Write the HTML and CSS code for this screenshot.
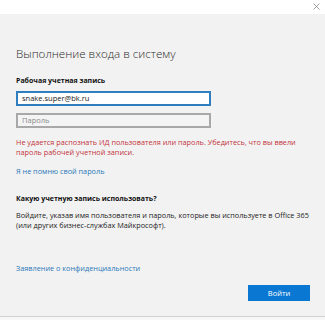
FILE: index.html
```html
<!DOCTYPE html>
<html lang="ru">
<head>
<meta charset="utf-8">
<title>Выполнение входа в систему</title>
<link rel="stylesheet" href="styles.css">
</head>
<body>
<div class="window">
  <div class="topbar">
    <svg class="close" width="7" height="7" viewBox="0 0 7 7" aria-label="Закрыть"><path d="M0.5 0.5 L6.5 6.5 M6.5 0.5 L0.5 6.5" stroke="#8a8a8a" stroke-width="0.8" fill="none"/></svg>
  </div>
  <div class="panel">
    <h1 class="title">Выполнение входа в систему</h1>
    <div class="label">Рабочая учетная запись</div>
    <div class="input input-active">snake.super@bk.ru</div>
    <div class="input input-pass">Пароль</div>
    <p class="error">Не удается распознать ИД пользователя или пароль. Убедитесь, что вы ввели пароль рабочей учетной записи.</p>
    <a class="link forgot" href="#">Я не помню свой пароль</a>
    <div class="label question">Какую учетную запись использовать?</div>
    <p class="para">Войдите, указав имя пользователя и пароль, которые вы используете в Office 365 (или других бизнес-службах Майкрософт).</p>
    <a class="link privacy" href="#">Заявление о конфиденциальности</a>
    <div class="actions"><button class="btn">Войти</button></div>
  </div>
  <div class="bottom"></div>
</div>
</body>
</html>
```
FILE: styles.css
```css
html, body {
  margin: 0;
  padding: 0;
  background: #ffffff;
}
body {
  font-family: "Open Sans", "Noto Sans", sans-serif;
  width: 325px;
  height: 320px;
  overflow: hidden;
}
.window {
  display: flex;
  flex-direction: column;
  height: 320px;
}
.topbar {
  height: 14px;
  background: #ffffff;
  display: flex;
  justify-content: flex-end;
  align-items: center;
  padding-right: 5px;
}
.close {
  display: block;
  margin-top: -1px;
}
.panel {
  background: #f2f2f2;
  height: 302px;
  box-sizing: border-box;
  padding: 32px 15px 0 16px;
  display: flex;
  flex-direction: column;
  align-items: flex-start;
}
.title {
  margin: 0;
  font-size: 11.6px;
  font-weight: 300;
  line-height: 16px;
  color: #2b2b2b;
}
.label {
  margin-top: 14px;
  font-size: 7px;
  font-weight: 700;
  line-height: 10px;
  color: #111111;
}
.input {
  box-sizing: border-box;
  width: 195px;
  height: 15px;
  margin-top: 5px;
  padding: 0 4px;
  font-size: 7.5px;
  line-height: 11px;
  background: #ffffff;
  color: #222222;
}
.input-active {
  border: 2px solid #2f7fc0;
}
.input-pass {
  margin-top: 7px;
  border: 2px solid #a8a8a8;
  background: #f4f4f4;
  color: #8a8a8a;
}
.error {
  margin: 9px 0 0;
  font-size: 7.3px;
  line-height: 10px;
  color: #c2323c;
  width: 285px;
}
.link {
  display: block;
  font-size: 7.3px;
  line-height: 10px;
  color: #2a78b8;
  text-decoration: none;
}
.forgot {
  margin-top: 9px;
}
.question {
  margin-top: 18px;
}
.para {
  margin: 6px 0 0;
  font-size: 7.3px;
  line-height: 10px;
  color: #222222;
  width: 300px;
}
.privacy {
  margin-top: 33px;
}
.actions {
  align-self: stretch;
  display: flex;
  justify-content: flex-end;
  margin-top: 12px;
}
.btn {
  width: 62px;
  height: 16px;
  border: none;
  padding: 0;
  background: #0a78d2;
  color: #ffffff;
  font-family: inherit;
  font-size: 7.5px;
  line-height: 16px;
}
.bottom {
  flex: 1;
  border-top: 1px solid #d2d2d2;
  background: #f7f7f7;
}
```
